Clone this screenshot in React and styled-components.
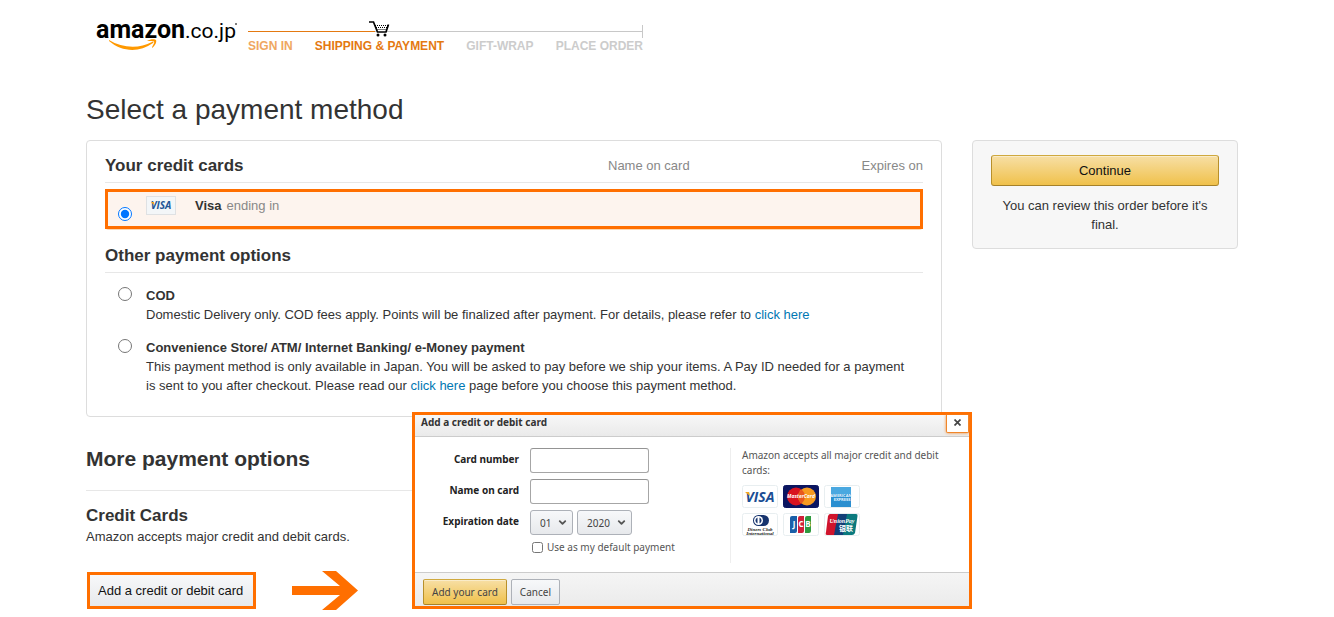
import React, { useState } from "react";
import styled, { createGlobalStyle, css } from "styled-components";
import { ChevronDown } from "lucide-react";

const GlobalStyle = createGlobalStyle`
  *, *::before, *::after {
    box-sizing: border-box;
  }

  body {
    margin: 0;
    background: #fff;
    color: #333;
    font-family: "Liberation Sans", Arial, sans-serif;
    font-size: 13px;
    line-height: 19px;
  }

  button, input, select {
    font-family: inherit;
  }
`;

const Page = styled.div`
  padding: 16px 96px 0 86px;
`;

const Header = styled.header`
  display: flex;
  gap: 10px;
  padding-left: 10px;
  height: 36px;
`;

const Logo = styled.svg`
  flex: none;
  width: 142px;
  height: 36px;
`;

const Steps = styled.nav`
  position: relative;
  width: 395px;
  padding-top: 9px;
`;

const Track = styled.div`
  display: flex;
  align-items: center;
  height: 13px;
  border-right: 1px solid #c8c8c8;
`;

const TrackPart = styled.span`
  flex: ${(props) => props.$size};
  height: 1px;
  background: ${(props) => (props.$done ? "#e47911" : "#c8c8c8")};
`;

const Cart = styled.svg`
  position: absolute;
  top: 5px;
  left: 121px;
  width: 21px;
  height: 16px;
`;

const StepList = styled.ol`
  display: flex;
  justify-content: space-between;
  margin: 0;
  padding: 0;
  list-style: none;
`;

const Step = styled.li`
  color: ${(props) => props.$color};
  font-size: 12px;
  font-weight: bold;
  line-height: 16px;
  white-space: nowrap;
`;

const Title = styled.h1`
  margin: 40px 0 12px;
  font-size: 28px;
  font-weight: normal;
  line-height: 36px;
`;

const Columns = styled.div`
  display: flex;
  align-items: flex-start;
  gap: 30px;
`;

const Main = styled.main`
  flex: 1;
  min-width: 0;
`;

const Box = styled.section`
  padding: 14px 18px 20px;
  border: 1px solid #ddd;
  border-radius: 4px;
`;

const SideBox = styled.aside`
  width: 266px;
  padding: 14px 18px;
  border: 1px solid #ddd;
  border-radius: 4px;
  background: #f7f7f7;
  text-align: center;
`;

const SideNote = styled.p`
  margin: 10px 0 0;
`;

const Heading = styled.h2`
  margin: 0;
  font-size: 17px;
  font-weight: bold;
  line-height: 22px;
`;

const RuledHeading = styled(Heading)`
  margin-top: 15px;
  padding-bottom: 5px;
  border-bottom: 1px solid #e7e7e7;
`;

const CardTable = styled.table`
  width: 100%;
  border-collapse: separate;
  border-spacing: 0;
  border-bottom: 1px solid #fbd8b4;
  border-radius: 4px;

  thead::after {
    content: "";
    display: block;
    height: 6px;
  }
`;

const HeadCell = styled.th`
  padding: 0 0 5px;
  border-bottom: 1px solid #e7e7e7;
  color: #888;
  font-weight: normal;
  line-height: 20px;
  text-align: ${(props) => props.$align || "left"};
  white-space: nowrap;

  h2 {
    color: #333;
  }
`;

const CardCell = styled.td`
  width: ${(props) => props.$width};
  height: 40px;
  padding: 4px 0 5px;
  border: solid #ff6f00;
  border-width: 3px 0;
  background: #fdf4ee;
  vertical-align: ${(props) => props.$valign || "top"};

  &:first-child {
    border-left-width: 3px;
  }

  &:last-child {
    border-right-width: 3px;
  }
`;

const CardLabel = styled.label`
  display: flex;
  align-items: center;
  color: #888;

  svg {
    margin-right: 19px;
  }

  b {
    margin-right: 5px;
    color: #333;
  }
`;

const Radio = styled.input`
  display: block;
  width: 14px;
  height: 14px;
  margin: 0 0 0 ${(props) => (props.$inset ? "10px" : "13px")};
`;

const Option = styled.div`
  display: grid;
  grid-template-columns: 41px 1fr;
  margin-top: 13px;
  padding-bottom: 1px;

  ${Radio} {
    margin-top: 1px;
  }
`;

const OptionText = styled.div`
  label {
    font-weight: bold;
  }

  p {
    max-width: 768px;
    margin: 0;
  }
`;

const Link = styled.a`
  color: #0077b3;
  text-decoration: none;
`;

const More = styled.section`
  position: relative;
  padding-top: 28px;
`;

const MoreTitle = styled.h2`
  margin: 0 0 14px;
  padding-bottom: 17px;
  border-bottom: 1px solid #e7e7e7;
  font-size: 21px;
  line-height: 28px;
`;

const Text = styled.p`
  margin: 0;
`;

const ActionRow = styled.div`
  display: flex;
  align-items: center;
  gap: 36px;
  margin: 25px 0 0 1px;
`;

const Arrow = styled.svg`
  width: 66px;
  height: 39px;
`;

const gold = css`
  border: 1px solid;
  border-color: #cfa93f #b8902a #a5812a;
  background: linear-gradient(#f7dfa5, #f0c14b);
  box-shadow: inset 0 1px 0 rgba(255, 255, 255, 0.4);
`;

const silver = css`
  border: 1px solid #adb1b8;
  background: linear-gradient(#f7f8fa, #e7e9ec);
`;

const ContinueButton = styled.button`
  ${gold}
  display: block;
  width: 100%;
  height: 31px;
  border-radius: 3px;
  color: #111;
  font-size: 13px;
`;

const AddButton = styled.button`
  height: 37px;
  padding: 0 10px 0 8px;
  border: 3px solid #ff6f00;
  background: linear-gradient(#f7f8fa, #e7e9ec);
  color: #111;
  font-size: 13px;
`;

const Dialog = styled.form`
  position: absolute;
  top: -5px;
  left: 326px;
  display: flex;
  flex-direction: column;
  width: 560px;
  border: 3px solid #ff6f00;
  background: #fff;
  color: #555;
  font-family: "Noto Sans", "Open Sans", sans-serif;
  font-size: 10px;
  line-height: 15px;
`;

const DialogHead = styled.div`
  display: flex;
  justify-content: space-between;
  height: 22px;
  padding-left: 6px;
  border-bottom: 1px solid #ccc;
  background: linear-gradient(#f7f7f7, #eaeaea);
`;

const DialogTitle = styled.h3`
  margin: 0;
  color: #333;
  font-size: 10px;
  line-height: 15px;
`;

const CloseButton = styled.button`
  width: 23px;
  height: 18px;
  padding: 0 0 2px;
  border: 1px solid #f0862a;
  border-top: 0;
  border-radius: 0 0 2px 2px;
  background: #fff;
  box-shadow: 0 0 3px #f0862a;
  color: #444;

  svg {
    display: block;
    margin: 0 auto;
  }
`;

const DialogBody = styled.div`
  display: flex;
  padding: 11px 12px 9px 0;
`;

const Fields = styled.div`
  display: grid;
  grid-template-columns: 104px 1fr;
  align-content: start;
  gap: 6px 11px;
  width: 315px;
`;

const FieldLabel = styled.label`
  padding-top: 4px;
  color: #222;
  font-weight: bold;
  text-align: right;
`;

const TextInput = styled.input`
  width: 119px;
  height: 25px;
  border: 1px solid #a6a6a6;
  border-top-color: #949494;
  border-radius: 3px;
  background: #fff;
  font-size: 10px;
`;

const Selects = styled.div`
  display: flex;
  gap: 4px;
`;

const SelectWrap = styled.div`
  position: relative;

  svg {
    position: absolute;
    top: 7px;
    right: 5px;
    pointer-events: none;
  }
`;

const Select = styled.select`
  ${silver}
  width: ${(props) => (props.$wide ? "55px" : "43px")};
  height: 25px;
  padding: 0 0 0 9px;
  border-radius: 3px;
  appearance: none;
  color: #444;
  font-size: 10px;
`;

const CheckLabel = styled.label`
  display: flex;
  grid-column: 2;
  align-items: center;
  gap: 4px;
  margin-left: 2px;
  line-height: 13px;

  input {
    width: 11px;
    height: 11px;
    margin: 0;
  }
`;

const Accepted = styled.div`
  flex: 1;
  height: 115px;
  padding-left: 11px;
  border-left: 1px solid #eee;
`;

const Logos = styled.div`
  display: grid;
  grid-template-columns: repeat(3, 36px);
  gap: 5px;
  margin-top: 7px;

  svg {
    display: block;
  }
`;

const DialogFoot = styled.div`
  display: flex;
  gap: 4px;
  height: 34px;
  padding: 6px 8px 0;
  border-top: 1px solid #ccc;
  background: linear-gradient(#f5f5f5, #ebebeb);
`;

const SmallButton = styled.button`
  ${(props) => (props.$primary ? gold : silver)}
  height: 26px;
  padding: 0 8px;
  border-radius: 2px;
  color: #444;
  font-size: 10px;
`;

const AmazonLogo = () => (
  <Logo viewBox="0 0 142 36" role="img" aria-label="amazon.co.jp">
    <text x="0" y="22" fontFamily="Roboto, sans-serif" fill="#000">
      <tspan fontSize="25" fontWeight="bold">
        amazon
      </tspan>
      <tspan fontSize="21">.co.jp</tspan>
    </text>
    <circle cx="140" cy="8" r="1" fill="#555" />
    <path
      d="M13 24 C26 32 43 33 56 26 C57 25 58 27 57 27 C43 37 26 36 13 25Z"
      fill="#f90"
    />
    <path
      d="M51 25 C54 23 59 23 60 24 C61 26 59 30 56 32 C56 30 59 27 58 25.500 C57 25 54 25 51 25Z"
      fill="#f90"
    />
  </Logo>
);

const CartIcon = () => (
  <Cart viewBox="0 0 21 16" aria-hidden="true">
    <path d="M5 3H19L17 11H8Z" fill="#fff" />
    <path
      d="M0 1H4.500L8.500 11H17L19.500 3.500"
      fill="none"
      stroke="#000"
      strokeWidth="1.700"
    />
    <path
      d="M6 4.500H19M7 6.500H18M7.500 8.500H17.500"
      stroke="#000"
      strokeWidth="1"
      strokeDasharray="1 1"
    />
    <circle cx="9" cy="14" r="1.500" />
    <circle cx="16" cy="14" r="1.500" />
  </Cart>
);

const LogoFrame = ({ name, fill = "#fff", stroke = "#e8eef0", children }) => (
  <svg width="36" height="23" viewBox="0 0 36 23" role="img" aria-label={name}>
    <rect
      x="0.500"
      y="0.500"
      width="35"
      height="22"
      rx="2"
      fill={fill}
      stroke={stroke}
    />
    {children}
  </svg>
);

const bold = {
  fontFamily: "'Open Sans', sans-serif",
  fontWeight: "bold",
  textAnchor: "middle",
};

const VisaLogo = () => (
  <LogoFrame name="Visa">
    <text {...bold} x="18" y="17" fontSize="14" fontStyle="italic" fill="#1a4d94">
      VISA
    </text>
    <path d="M3 7H7L8 11Z" fill="#f5a81c" />
  </LogoFrame>
);

const MasterCardLogo = () => (
  <LogoFrame name="MasterCard" fill="#0b1560" stroke="#0b1560">
    <circle cx="13" cy="11.500" r="9" fill="#d8131f" />
    <circle cx="24" cy="11.500" r="9" fill="#f79a1f" />
    <path d="M18.500 4.500A9 9 0 0 1 18.500 18.500A9 9 0 0 1 18.500 4.500Z" fill="#e8571e" />
    <text {...bold} x="18" y="13" fontSize="5" fontStyle="italic" fill="#fff">
      MasterCard
    </text>
  </LogoFrame>
);

const AmexLogo = () => (
  <LogoFrame name="American Express">
    <rect x="7" y="2" width="20" height="20" fill="#2a8fd0" />
    <rect x="7" y="2" width="20" height="7" fill="#4aa8e0" />
    <g {...bold} fontSize="4" fill="#e9f6ff">
      <text x="17" y="12">AMERICAN</text>
      <text x="18" y="16">EXPRESS</text>
    </g>
  </LogoFrame>
);

const DinersLogo = () => (
  <LogoFrame name="Diners Club International">
    <rect x="11" y="2" width="16" height="11" rx="5.500" fill="#17346e" />
    <circle cx="16.500" cy="7.500" r="4.500" fill="#fff" />
    <path d="M15.500 4.500A3.200 3.200 0 0 0 15.500 10.500ZM17.500 4.500A3.200 3.200 0 0 1 17.500 10.500Z" fill="#17346e" />
    <g
      fontFamily="'Liberation Serif', serif"
      fontStyle="italic"
      fontWeight="bold"
      textAnchor="middle"
      fill="#222"
    >
      <text x="18" y="17.500" fontSize="5">Diners Club</text>
      <text x="18" y="21.500" fontSize="5">International</text>
    </g>
  </LogoFrame>
);

const JcbLogo = () => (
  <LogoFrame name="JCB">
    <path d="M9 3H14V18Q14 20 12 20H7V5Q7 3 9 3Z" fill="#1a5fa8" />
    <path d="M17 3H21V18Q21 20 19 20H15V5Q15 3 17 3Z" fill="#d0203a" />
    <path d="M24 3H28V18Q28 20 26 20H22V5Q22 3 24 3Z" fill="#2f9a40" />
    <g {...bold} fontSize="8" fill="#fff">
      <text x="11" y="14">J</text>
      <text x="18" y="14">C</text>
      <text x="25" y="14">B</text>
    </g>
  </LogoFrame>
);

const UnionPayLogo = () => (
  <LogoFrame name="UnionPay">
    <path d="M6 1H16L12 22H3Q1 22 2 19L4 3Q5 1 6 1Z" fill="#d0142c" />
    <path d="M14 1H25L21 22H10Z" fill="#123f78" />
    <path d="M23 1H32Q34 1 33.500 3L31 20Q30 22 28 22H19Z" fill="#0b7a7e" />
    <g textAnchor="middle" fill="#fff" fontWeight="bold">
      <text x="18" y="10" fontSize="6" fontStyle="italic" fontFamily="'Liberation Serif', serif">
        UnionPay
      </text>
      <text x="22" y="18" fontSize="7" fontFamily="'Noto Sans CJK SC', sans-serif">
        银联
      </text>
    </g>
  </LogoFrame>
);

const SmallVisa = () => (
  <svg width="30" height="19" viewBox="0 0 30 19" aria-hidden="true">
    <rect x="0.500" y="0.500" width="29" height="18" fill="#f3f6f8" stroke="#dfe1e3" />
    <text {...bold} x="15" y="13" fontSize="10" fontStyle="italic" fill="#1f5596">
      VISA
    </text>
    <path d="M5 6H8L8 9Z" fill="#f5a81c" />
  </svg>
);

const steps = [
  { name: "SIGN IN", color: "#efa761" },
  { name: "SHIPPING & PAYMENT", color: "#e47911" },
  { name: "GIFT-WRAP", color: "#ccc" },
  { name: "PLACE ORDER", color: "#ccc" },
];

const AddCardDialog = () => (
  <Dialog onSubmit={(e) => e.preventDefault()}>
    <DialogHead>
      <DialogTitle>Add a credit or debit card</DialogTitle>
      <CloseButton type="button" aria-label="Close">
        <svg width="7" height="7" viewBox="0 0 7 7">
          <path d="M0.500 0.500L6.500 6.500M6.500 0.500L0.500 6.500" stroke="#444" strokeWidth="1.700" />
        </svg>
      </CloseButton>
    </DialogHead>
    <DialogBody>
      <Fields>
        <FieldLabel htmlFor="number">Card number</FieldLabel>
        <TextInput id="number" />
        <FieldLabel htmlFor="name">Name on card</FieldLabel>
        <TextInput id="name" />
        <FieldLabel htmlFor="month">Expiration date</FieldLabel>
        <Selects>
          <SelectWrap>
            <Select id="month">
              <option>01</option>
            </Select>
            <ChevronDown size={11} strokeWidth={4} />
          </SelectWrap>
          <SelectWrap>
            <Select $wide aria-label="Expiration year">
              <option>2020</option>
            </Select>
            <ChevronDown size={11} strokeWidth={4} />
          </SelectWrap>
        </Selects>
        <CheckLabel>
          <input type="checkbox" />
          Use as my default payment
        </CheckLabel>
      </Fields>
      <Accepted>
        Amazon accepts all major credit and debit cards:
        <Logos>
          <VisaLogo />
          <MasterCardLogo />
          <AmexLogo />
          <DinersLogo />
          <JcbLogo />
          <UnionPayLogo />
        </Logos>
      </Accepted>
    </DialogBody>
    <DialogFoot>
      <SmallButton $primary>Add your card</SmallButton>
      <SmallButton type="button">Cancel</SmallButton>
    </DialogFoot>
  </Dialog>
);

const App = () => {
  const [method, setMethod] = useState("visa");

  const radio = (value) => ({
    type: "radio",
    name: "method",
    id: value,
    checked: method === value,
    onChange: () => setMethod(value),
  });

  return (
    <Page>
      <GlobalStyle />
      <Header>
        <AmazonLogo />
        <Steps>
          <Track>
            <TrackPart $size={127} $done />
            <TrackPart $size={267} />
          </Track>
          <CartIcon />
          <StepList>
            {steps.map((step) => (
              <Step key={step.name} $color={step.color}>
                {step.name}
              </Step>
            ))}
          </StepList>
        </Steps>
      </Header>
      <Title>Select a payment method</Title>
      <Columns>
        <Main>
          <Box>
            <CardTable>
              <thead>
                <tr>
                  <HeadCell colSpan={2}>
                    <Heading>Your credit cards</Heading>
                  </HeadCell>
                  <HeadCell>Name on card</HeadCell>
                  <HeadCell $align="right">Expires on</HeadCell>
                </tr>
              </thead>
              <tbody>
                <tr>
                  <CardCell $width="41px" $valign="bottom">
                    <Radio {...radio("visa")} $inset />
                  </CardCell>
                  <CardCell>
                    <CardLabel htmlFor="visa">
                      <SmallVisa />
                      <b>Visa</b> ending in
                    </CardLabel>
                  </CardCell>
                  <CardCell $width="160px" />
                  <CardCell $width="155px" />
                </tr>
              </tbody>
            </CardTable>
            <RuledHeading>Other payment options</RuledHeading>
            <Option>
              <Radio {...radio("cod")} />
              <OptionText>
                <label htmlFor="cod">COD</label>
                <p>
                  Domestic Delivery only. COD fees apply. Points will be
                  finalized after payment. For details, please refer to{" "}
                  <Link href="#cod">click here</Link>
                </p>
              </OptionText>
            </Option>
            <Option>
              <Radio {...radio("store")} />
              <OptionText>
                <label htmlFor="store">
                  Convenience Store/ ATM/ Internet Banking/ e-Money payment
                </label>
                <p>
                  This payment method is only available in Japan. You will be
                  asked to pay before we ship your items. A Pay ID needed for a
                  payment is sent to you after checkout. Please read our{" "}
                  <Link href="#store">click here</Link> page before you choose
                  this payment method.
                </p>
              </OptionText>
            </Option>
          </Box>
          <More>
            <MoreTitle>More payment options</MoreTitle>
            <Heading>Credit Cards</Heading>
            <Text>Amazon accepts major credit and debit cards.</Text>
            <ActionRow>
              <AddButton type="button">Add a credit or debit card</AddButton>
              <Arrow viewBox="0 0 66 39" aria-hidden="true">
                <path
                  d="M30 0H44L66 19.500L44 39H30L48 24H0V15H48Z"
                  fill="#ff6f00"
                />
              </Arrow>
            </ActionRow>
            <AddCardDialog />
          </More>
        </Main>
        <SideBox>
          <ContinueButton type="button">Continue</ContinueButton>
          <SideNote>You can review this order before it's final.</SideNote>
        </SideBox>
      </Columns>
    </Page>
  );
};

export default App;
